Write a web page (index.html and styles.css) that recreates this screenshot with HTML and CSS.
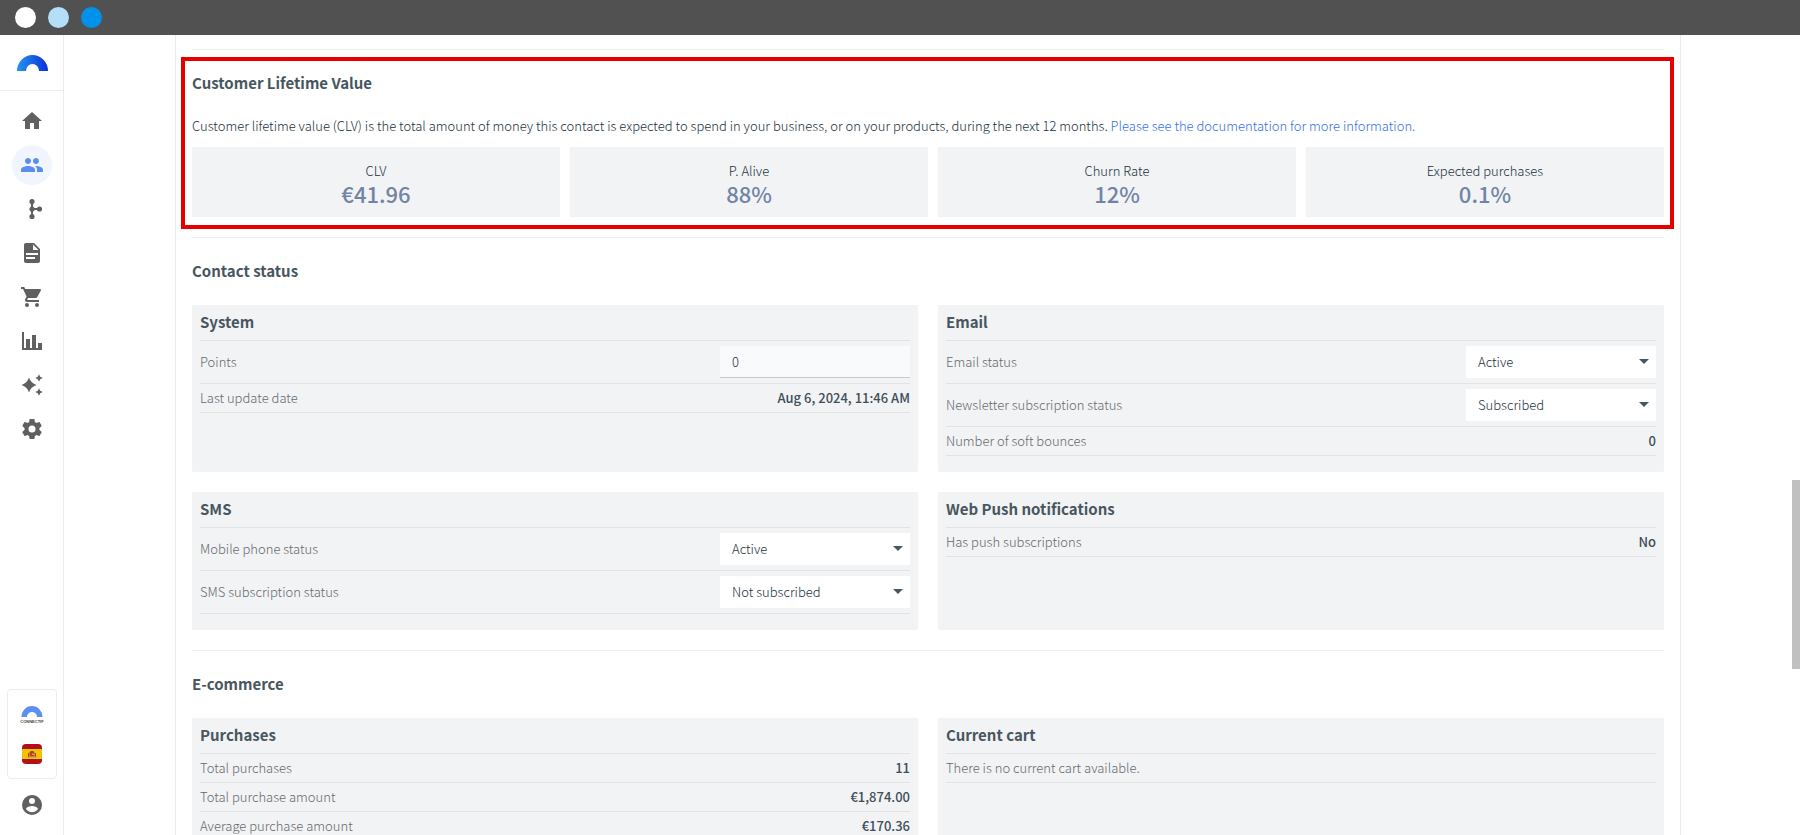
FILE: index.html
```html
<!DOCTYPE html>
<html lang="en">
  <head>
    <meta charset="UTF-8" />
    <meta name="viewport" content="width=device-width, initial-scale=1.0" />
    <title>Contact - Connectif</title>
    <link rel="stylesheet" href="styles.css">
  </head>
  <body>
    <!-- Window bar -->
    <header class="topbar">
      <span class="dot dot-white"></span>
      <span class="dot dot-light"></span>
      <span class="dot dot-blue"></span>
    </header>

    <div class="app">
      <!-- Sidebar -->
      <aside class="sidebar">
        <a class="logo" href="#" aria-label="Connectif">
          <svg width="31" height="16" viewBox="0 0 31 16">
            <defs>
              <linearGradient id="logo-gradient" x1="0" y1="0" x2="1" y2="0">
                <stop offset="0" stop-color="#2196ee" />
                <stop offset="1" stop-color="#0d2fdb" />
              </linearGradient>
            </defs>
            <path fill="url(#logo-gradient)" d="M0 16a15.5 16 0 0 1 31 0h-9a6.5 7 0 0 0-13 0z" />
          </svg>
        </a>

        <nav class="menu">
          <a class="menu-item" href="#" aria-label="Home">
            <svg class="icon" viewBox="0 0 24 24"><path d="M10 20v-6h4v6h5v-8h3L12 3 2 12h3v8z" /></svg>
          </a>
          <a class="menu-item active" href="#" aria-label="Contacts">
            <svg class="icon" viewBox="0 0 24 24"><path d="M16 11c1.66 0 2.99-1.34 2.99-3S17.66 5 16 5s-3 1.34-3 3 1.34 3 3 3zm-8 0c1.66 0 2.99-1.34 2.99-3S9.66 5 8 5 5 6.34 5 8s1.34 3 3 3zm0 2c-2.33 0-7 1.17-7 3.5V19h14v-2.5c0-2.33-4.67-3.5-7-3.5zm8 0c-.29 0-.62.02-.97.05 1.16.84 1.97 1.97 1.97 3.45V19h6v-2.5c0-2.33-4.67-3.5-7-3.5z" /></svg>
          </a>
          <a class="menu-item" href="#" aria-label="Workflows">
            <svg class="icon" viewBox="0 0 24 24">
              <path d="M11 4h2v7h6v2h-6v7h-2z" />
              <circle cx="12" cy="4.5" r="2.6" />
              <circle cx="12" cy="12" r="2.6" />
              <circle cx="12" cy="19.5" r="2.6" />
              <circle cx="19.5" cy="12" r="2.6" />
            </svg>
          </a>
          <a class="menu-item" href="#" aria-label="Contents">
            <svg class="icon" viewBox="0 0 24 24"><path d="M13,9H18.5L13,3.5V9M6,2H14L20,8V20A2,2 0 0,1 18,22H6C4.89,22 4,21.1 4,20V4C4,2.89 4.89,2 6,2M15,18V16H6V18H15M18,14V12H6V14H18Z" /></svg>
          </a>
          <a class="menu-item" href="#" aria-label="Store">
            <svg class="icon" viewBox="0 0 24 24"><path d="M17,18C15.89,18 15,18.89 15,20A2,2 0 0,0 17,22A2,2 0 0,0 19,20C19,18.89 18.1,18 17,18M1,2V4H3L6.6,11.59L5.24,14.04C5.09,14.32 5,14.65 5,15A2,2 0 0,0 7,17H19V15H7.42A0.25,0.25 0 0,1 7.17,14.75C7.17,14.7 7.18,14.66 7.2,14.63L8.1,13H15.55C16.3,13 16.96,12.58 17.3,11.97L20.88,5.5C20.95,5.34 21,5.17 21,5A1,1 0 0,0 20,4H5.21L4.27,2M7,18C5.89,18 5,18.89 5,20A2,2 0 0,0 7,22A2,2 0 0,0 9,20C9,18.89 8.1,18 7,18Z" /></svg>
          </a>
          <a class="menu-item" href="#" aria-label="Reports">
            <svg class="icon" viewBox="0 0 24 24"><path d="M22,21H2V3H4V19H6V10H10V19H12V6H16V19H18V14H22V21Z" /></svg>
          </a>
          <a class="menu-item" href="#" aria-label="AI tools">
            <svg class="icon" viewBox="0 0 24 24"><path d="M9 4.500Q10.800 10.200 16.500 12Q10.800 13.800 9 19.500Q7.200 13.800 1.500 12Q7.200 10.200 9 4.500zM19 1.300L20.200 3.800L22.700 5L20.200 6.200L19 8.700L17.800 6.200L15.300 5L17.800 3.800zM19 15.300L20.200 17.800L22.700 19L20.200 20.200L19 22.700L17.800 20.200L15.300 19L17.800 17.800z" /></svg>
          </a>
          <a class="menu-item" href="#" aria-label="Settings">
            <svg class="icon" viewBox="0 0 24 24"><path d="M12,15.5A3.5,3.5 0 0,1 8.5,12A3.5,3.5 0 0,1 12,8.5A3.5,3.5 0 0,1 15.5,12A3.5,3.5 0 0,1 12,15.5M19.43,12.97C19.47,12.65 19.5,12.33 19.5,12C19.5,11.67 19.47,11.34 19.43,11L21.54,9.37C21.73,9.22 21.78,8.95 21.66,8.73L19.66,5.27C19.54,5.05 19.27,4.96 19.05,5.05L16.56,6.05C16.04,5.66 15.5,5.32 14.87,5.07L14.5,2.42C14.46,2.18 14.25,2 14,2H10C9.75,2 9.54,2.18 9.5,2.42L9.13,5.07C8.5,5.32 7.96,5.66 7.44,6.05L4.95,5.05C4.73,4.96 4.46,5.05 4.34,5.27L2.34,8.73C2.21,8.95 2.27,9.22 2.46,9.37L4.57,11C4.53,11.34 4.5,11.67 4.5,12C4.5,12.33 4.53,12.65 4.57,12.97L2.46,14.63C2.27,14.78 2.21,15.05 2.34,15.27L4.34,18.73C4.46,18.95 4.73,19.03 4.95,18.95L7.44,17.94C7.96,18.34 8.5,18.68 9.13,18.93L9.5,21.58C9.54,21.82 9.75,22 10,22H14C14.25,22 14.46,21.82 14.5,21.58L14.87,18.93C15.5,18.67 16.04,18.34 16.56,17.94L19.05,18.95C19.27,19.03 19.54,18.95 19.66,18.73L21.66,15.27C21.78,15.05 21.73,14.78 21.54,14.63L19.43,12.97Z" /></svg>
          </a>
        </nav>

        <div class="account">
          <div class="stores">
            <button class="store-btn" aria-label="Connectif account">
              <svg width="24" height="20" viewBox="0 0 24 20">
                <path fill="#5b8ff0" d="M1.500 13a10.500 11 0 0 1 21 0h-5.500a5 5 0 0 0-10 0z" />
                <text x="12" y="19" text-anchor="middle" font-size="4" font-weight="bold" fill="#444">CONNECTIF</text>
              </svg>
            </button>
            <button class="store-btn" aria-label="Spanish store">
              <svg class="flag" width="20" height="20" viewBox="0 0 20 20">
                <path fill="#b01116" d="M0 0h20v20H0z" />
                <path fill="#f3c300" d="M0 5h20v10H0z" />
                <path fill="#b5441c" d="M8.500 7h3l1 1.500v4H7.500v-4zM6 9h1v4H6zM13 9h1v4h-1z" />
                <path fill="#a9a294" d="M10 9.500h2v1.500h-2zM6 13h8v.8H6z" />
              </svg>
            </button>
          </div>
          <button class="user-btn" aria-label="User">
            <svg class="icon" viewBox="0 0 24 24"><path d="M12,19.2C9.5,19.2 7.29,17.92 6,16C6.03,14 10,12.9 12,12.9C14,12.9 17.97,14 18,16C16.71,17.92 14.5,19.2 12,19.2M12,5A3,3 0 0,1 15,8A3,3 0 0,1 12,11A3,3 0 0,1 9,8A3,3 0 0,1 12,5M12,2A10,10 0 0,0 2,12A10,10 0 0,0 12,22A10,10 0 0,0 22,12C22,6.47 17.5,2 12,2Z" /></svg>
          </button>
        </div>
      </aside>

      <!-- Contact page -->
      <main class="content">
        <div class="sheet">
          <hr class="divider" />

          <section class="highlight">
            <h2>Customer Lifetime Value</h2>
            <p class="description">
              Customer lifetime value (CLV) is the total amount of money this contact is expected to spend in your business, or on your products, during the next 12 months.
              <a href="#">Please see the documentation for more information.</a>
            </p>
            <div class="tiles">
              <div class="tile">
                <div class="tile-label">CLV</div>
                <div class="tile-value">€41.96</div>
              </div>
              <div class="tile">
                <div class="tile-label">P. Alive</div>
                <div class="tile-value">88%</div>
              </div>
              <div class="tile">
                <div class="tile-label">Churn Rate</div>
                <div class="tile-value">12%</div>
              </div>
              <div class="tile">
                <div class="tile-label">Expected purchases</div>
                <div class="tile-value">0.1%</div>
              </div>
            </div>
          </section>

          <hr class="divider" />

          <section>
            <h2>Contact status</h2>
            <div class="cards">
              <div class="card">
                <h3>System</h3>
                <div class="row">
                  <label for="points">Points</label>
                  <input class="field" id="points" type="text" value="0" />
                </div>
                <div class="row">
                  <span>Last update date</span>
                  <strong>Aug 6, 2024, 11:46 AM</strong>
                </div>
              </div>

              <div class="card">
                <h3>Email</h3>
                <div class="row">
                  <label for="email-status">Email status</label>
                  <div class="select">
                    <select class="field" id="email-status">
                      <option selected>Active</option>
                      <option>Inactive</option>
                    </select>
                  </div>
                </div>
                <div class="row">
                  <label for="newsletter-status">Newsletter subscription status</label>
                  <div class="select">
                    <select class="field" id="newsletter-status">
                      <option selected>Subscribed</option>
                      <option>Not subscribed</option>
                    </select>
                  </div>
                </div>
                <div class="row">
                  <span>Number of soft bounces</span>
                  <strong>0</strong>
                </div>
              </div>

              <div class="card">
                <h3>SMS</h3>
                <div class="row">
                  <label for="phone-status">Mobile phone status</label>
                  <div class="select">
                    <select class="field" id="phone-status">
                      <option selected>Active</option>
                      <option>Inactive</option>
                    </select>
                  </div>
                </div>
                <div class="row">
                  <label for="sms-status">SMS subscription status</label>
                  <div class="select">
                    <select class="field" id="sms-status">
                      <option>Subscribed</option>
                      <option selected>Not subscribed</option>
                    </select>
                  </div>
                </div>
              </div>

              <div class="card">
                <h3>Web Push notifications</h3>
                <div class="row">
                  <span>Has push subscriptions</span>
                  <strong>No</strong>
                </div>
              </div>
            </div>
          </section>

          <hr class="divider" />

          <section>
            <h2>E-commerce</h2>
            <div class="cards">
              <div class="card">
                <h3>Purchases</h3>
                <div class="row">
                  <span>Total purchases</span>
                  <strong>11</strong>
                </div>
                <div class="row">
                  <span>Total purchase amount</span>
                  <strong>€1,874.00</strong>
                </div>
                <div class="row">
                  <span>Average purchase amount</span>
                  <strong>€170.36</strong>
                </div>
              </div>

              <div class="card">
                <h3>Current cart</h3>
                <div class="row">
                  <span>There is no current cart available.</span>
                </div>
              </div>
            </div>
          </section>
        </div>
      </main>

      <div class="scrollbar"><div class="scroll-thumb"></div></div>
    </div>
  </body>
</html>
```
FILE: styles.css
```css
/* General */
* {
  box-sizing: border-box;
}

body {
  margin: 0;
  height: 100vh;
  display: flex;
  flex-direction: column;
  overflow: hidden;
  font-family: "Noto Sans CJK SC", sans-serif;
  font-size: 13px;
  font-weight: 300;
  line-height: 20px;
  color: #22313c;
  background-color: #fff;
}

a {
  color: #3370e6;
  text-decoration: none;
}

button {
  padding: 0;
  border: none;
  background: none;
  cursor: pointer;
}

svg {
  display: block;
}

/* Window bar */
.topbar {
  display: flex;
  align-items: center;
  gap: 12px;
  flex: none;
  height: 35px;
  padding: 0 15px;
  background-color: #515151;
}

.dot {
  width: 21px;
  height: 21px;
  border-radius: 50%;
}

.dot-white {
  background-color: #fff;
}

.dot-light {
  background-color: #b3dff8;
}

.dot-blue {
  background-color: #0091ea;
}

.app {
  display: flex;
  flex: 1;
  min-height: 0;
}

/* Sidebar */
.sidebar {
  display: flex;
  flex-direction: column;
  flex: none;
  width: 64px;
  border-right: 1px solid #ececec;
}

.logo {
  display: flex;
  align-items: center;
  justify-content: center;
  height: 56px;
  padding-left: 2px;
  border-bottom: 1px solid #ececec;
}

.menu {
  display: flex;
  flex-direction: column;
  align-items: center;
  gap: 4px;
  padding: 10px 0 0 1px;
}

.menu-item {
  display: flex;
  align-items: center;
  justify-content: center;
  width: 40px;
  height: 40px;
  border-radius: 50%;
  color: #606060;
}

.menu-item.active {
  color: #5b8def;
  background-color: #f0f5fe;
}

.icon {
  width: 24px;
  height: 24px;
  fill: currentColor;
}

.account {
  display: flex;
  flex-direction: column;
  align-items: center;
  gap: 14px;
  margin-top: auto;
  padding: 0 0 18px 1px;
}

.stores {
  display: flex;
  flex-direction: column;
  align-items: center;
  justify-content: space-between;
  width: 50px;
  height: 90px;
  padding: 14px 0;
  border: 1px solid #ececec;
  border-radius: 4px;
}

.flag {
  border-radius: 4px;
}

.user-btn {
  color: #606060;
}

/* Contact page */
.content {
  flex: 1;
  min-width: 0;
  padding: 0 111px;
  overflow: hidden;
}

.sheet {
  min-height: 100%;
  padding: 14px 16px 20px;
  border: 1px solid #ececec;
  border-width: 0 1px;
  box-shadow: 0 0 8px rgba(0, 0, 0, 0.02);
}

.divider {
  margin: 0;
  border: none;
  border-top: 1px solid #ececec;
}

h2 {
  margin: 0;
  padding: 21px 0 22px;
  font-size: 15px;
  line-height: 24px;
  font-weight: bold;
  color: #485660;
}

.highlight {
  margin: 7px -10px 8px -11px;
  padding: 0 6px 8px 7px;
  border: 4px solid #e60000;
}

.highlight h2 {
  padding: 10px 0 21px;
}

.description {
  margin: 0 0 11px;
}

.tiles {
  display: grid;
  grid-template-columns: repeat(4, 1fr);
}

.tile {
  padding: 14px 10px 12px;
  text-align: center;
  background-color: #f1f3f5;
}

.tile + .tile {
  margin-left: 10px;
}

.tile-value {
  font-size: 22px;
  line-height: 24px;
  font-weight: 500;
  color: #7184a6;
}

/* Cards */
.cards {
  display: grid;
  grid-template-columns: 1fr 1fr;
  gap: 20px;
  margin-bottom: 20px;
}

.card {
  padding: 0 8px 16px;
  border-radius: 2px;
  background-color: #f1f3f5;
}

h3 {
  margin: 0;
  padding: 5px 0 6px;
  font-size: 15px;
  line-height: 24px;
  font-weight: bold;
  color: #485660;
  border-bottom: 1px solid #e1e3e5;
}

.row {
  display: flex;
  align-items: center;
  justify-content: space-between;
  min-height: 29px;
  border-bottom: 1px solid #e1e3e5;
  color: #67696c;
}

.row strong {
  font-weight: 500;
  color: #3f4e59;
}

/* Form fields */
.field {
  display: block;
  width: 190px;
  height: 32px;
  margin: 5px 0;
  padding: 0 12px;
  border: none;
  border-radius: 0;
  font: inherit;
  color: #22313c;
  background-color: #fff;
  appearance: none;
}

input.field {
  border-bottom: 1px solid #c9ccce;
  background-color: #f9fafc;
}

.select {
  position: relative;
}

/* Dropdown arrow */
.select::after {
  content: "";
  position: absolute;
  top: 18px;
  right: 7px;
  border: 5px solid transparent;
  border-top-color: #485660;
  border-bottom: none;
  pointer-events: none;
}

/* Scrollbar */
.scrollbar {
  flex: none;
  width: 8px;
  display: grid;
  grid-template-rows: 445fr 189fr 166fr;
}

.scroll-thumb {
  grid-row: 2;
  background-color: #c0c0c0;
}
```
